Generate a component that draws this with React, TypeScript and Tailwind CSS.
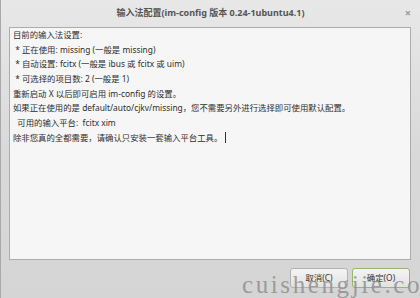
import React from 'react';

const lines = [
    '目前的输入法设置:',
    ' * 正在使用: missing (一般是 missing)',
    ' * 自动设置: fcitx (一般是 ibus 或 fcitx 或 uim)',
    ' * 可选择的项目数: 2 (一般是 1)',
    '重新启动 X 以后即可启用 im-config 的设置。',
    '如果正在使用的是 default/auto/cjkv/missing，您不需要另外进行选择即可使用默认配置。',
    '  可用的输入平台:  fcitx xim',
];

const font = { fontFamily: '"Noto Sans", "Noto Sans CJK SC", sans-serif' };

export default function App() {
    return (
        <div
            className="relative w-[420px] h-[298px] overflow-hidden flex flex-col bg-gradient-to-b from-[#e8e8e8] via-[#d9d9d9] to-[#d5d5d5] border-l border-[#a9a9a9]"
            style={font}
        >
            {/* Title bar */}
            <div className="relative h-[27px] flex items-center justify-center">
                <span className="text-[9px] font-bold text-[#555] pb-[1px]">
                    输入法配置(im-config 版本 0.24-1ubuntu4.1)
                </span>
                <span className="absolute right-[9px] top-[5px] text-[11px] font-bold text-[#9a9a9a]">×</span>
            </div>

            {/* Text area */}
            <div className="ml-[8px] mr-[9px] h-[233px] border border-[#acacac] bg-[#f6f6f6] pl-[3px] pt-[0px]">
                {lines.map((l, i) => (
                    <div key={i} className="h-[14.67px] leading-[14.67px] text-[8.4px] text-[#2e2e2e] whitespace-pre">
                        {l}
                    </div>
                ))}
                <div className="h-[14.67px] leading-[14.67px] text-[8.4px] text-[#2e2e2e] whitespace-pre flex items-center">
                    除非您真的全都需要，请确认只安装一套输入平台工具。
                    <span className="inline-block w-px h-[11px] bg-[#333] ml-[3px]" />
                </div>
            </div>

            {/* Buttons */}
            <div className="flex justify-end gap-[4px] pr-[10px] mt-[8px]">
                <button className="w-[58px] h-[20px] rounded-[3px] border border-[#b3b3b3] bg-gradient-to-b from-[#f4f4f4] to-[#e2e2e2] text-[8.4px] text-[#333]">
                    取消(C)
                </button>
                <button className="w-[58px] h-[20px] rounded-[3px] border border-[#93b86b] bg-gradient-to-b from-[#f4f4f4] to-[#e2e2e2] text-[8.4px] text-[#333]">
                    确定(O)
                </button>
            </div>

            {/* Watermark */}
            <div
                className="absolute left-[241px] top-[272px] text-[25px] leading-none tracking-[2.6px] text-[#8a8a8a]/80 pointer-events-none"
                style={{ fontFamily: '"Liberation Serif", serif' }}
            >
                cuishengjie.com
            </div>
        </div>
    );
}
